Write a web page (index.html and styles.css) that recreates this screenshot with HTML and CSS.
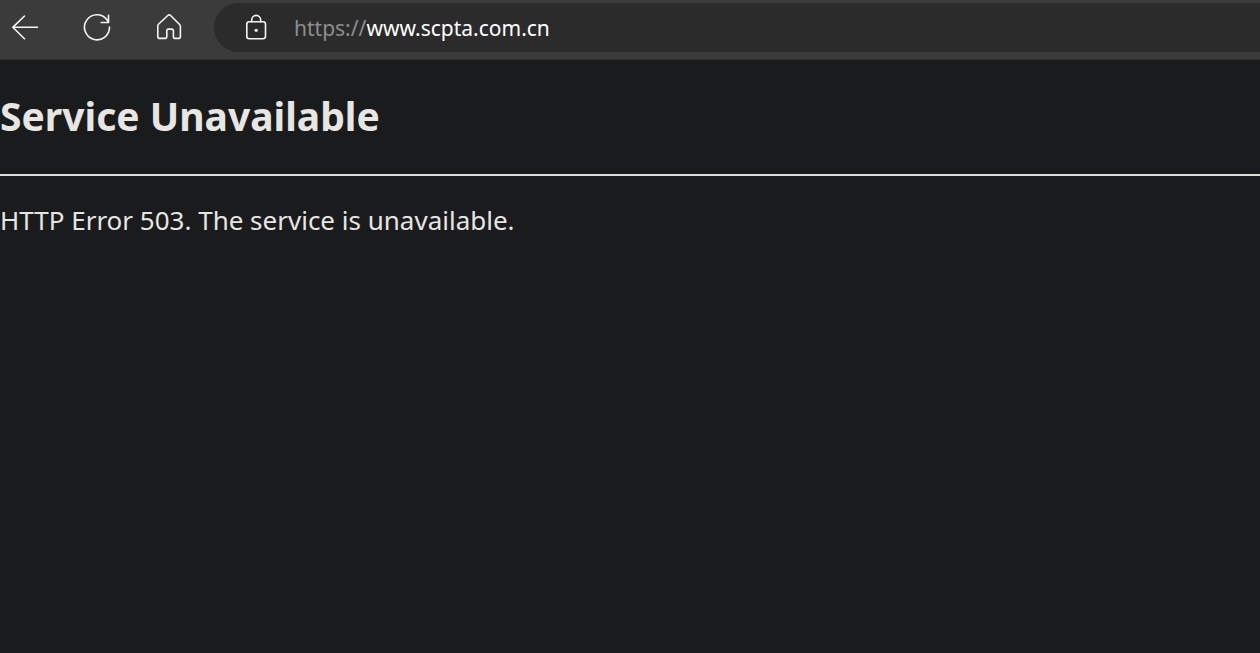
FILE: index.html
```html
<!DOCTYPE html>
<html lang="en">
<head>
<meta charset="utf-8">
<meta name="viewport" content="width=device-width, initial-scale=1">
<title>Service Unavailable</title>
<link rel="stylesheet" href="styles.css">
</head>
<body>
<header class="toolbar">
  <nav class="nav" aria-label="Browser">
    <button class="nav-button" type="button" aria-label="Back">
      <svg class="icon" viewBox="0 0 32 32"><path d="M15.500 4 3.800 15.300l11.700 11.500M4.300 15.300H28.500"/></svg>
    </button>
    <button class="nav-button" type="button" aria-label="Refresh">
      <svg class="icon" viewBox="0 0 32 32"><path d="M28.500 15.100A12.500 12.500 0 1 1 26 7.800L27.500 10M27.500 3.300v7.200h-7.300"/></svg>
    </button>
    <button class="nav-button" type="button" aria-label="Home">
      <svg class="icon" viewBox="0 0 32 32"><path d="M5.200 12.500 14.800 3.500q1.400-1.200 2.800 0l9 9q.8.800.8 2v9.900q0 2-2 2h-3q-2 0-2-2v-5.600q0-1.700-1.700-1.700h-3.200q-1.700 0-1.700 1.700v5.600q0 2-2 2H6.800q-2 0-2-2v-9.900q0-1.200.4-2z"/></svg>
    </button>
  </nav>
  <form class="address">
    <svg class="icon" viewBox="0 0 32 32" aria-hidden="true"><rect x="6.800" y="9.800" width="18.700" height="17" rx="2.500"/><path d="M11.700 9.800V7.900a4.500 4.500 0 0 1 9 0v1.900"/><circle class="dot" cx="16.200" cy="18.300" r="1.600"/></svg>
    <label class="scheme" for="host">https://</label>
    <input class="host" id="host" type="text" value="www.scpta.com.cn" spellcheck="false">
  </form>
</header>
<main class="page">
  <h1 class="title">Service Unavailable</h1>
  <hr class="rule">
  <p class="message">HTTP Error 503. The service is unavailable.</p>
</main>
</body>
</html>
```
FILE: styles.css
```css
* {
  box-sizing: border-box;
}

body {
  margin: 0;
  min-height: 100vh;
  background: #1a1b1d;
  color: #e8e6e3;
  font-family: "Segoe UI", "Noto Sans", sans-serif;
}

.toolbar {
  display: flex;
  align-items: center;
  gap: 29px;
  padding: 3px 0 7px 9px;
  background: #3b3b3b;
  border-bottom: 1px solid #303132;
}

.nav {
  display: flex;
  gap: 40px;
}

.nav-button {
  display: flex;
  padding: 0;
  border: 0;
  background: none;
}

.icon {
  flex: none;
  width: 32px;
  height: 32px;
  fill: none;
  stroke: #f5f5f5;
  stroke-width: 1.6;
  stroke-linecap: round;
  stroke-linejoin: round;
}

.dot {
  fill: #ffffff;
  stroke: none;
}

.address {
  display: flex;
  flex: 1;
  align-items: center;
  height: 49px;
  padding-left: 26px;
  border-radius: 25px 0 0 25px;
  background: #2b2b2b;
  font-size: 21px;
  line-height: 32px;
}

.scheme {
  margin-left: 22px;
  color: #8e8e8e;
}

.host {
  flex: 1;
  min-width: 0;
  padding: 0;
  border: 0;
  outline: 0;
  background: none;
  color: #ffffff;
  font: inherit;
}

.title {
  margin: 26px 0 28px;
  font-size: 39px;
  line-height: 60px;
}

.rule {
  height: 2px;
  margin: 0;
  border: 0;
  background: #dddbd8;
}

.message {
  margin: 24px 0;
  font-size: 26px;
  line-height: 40px;
}
```
